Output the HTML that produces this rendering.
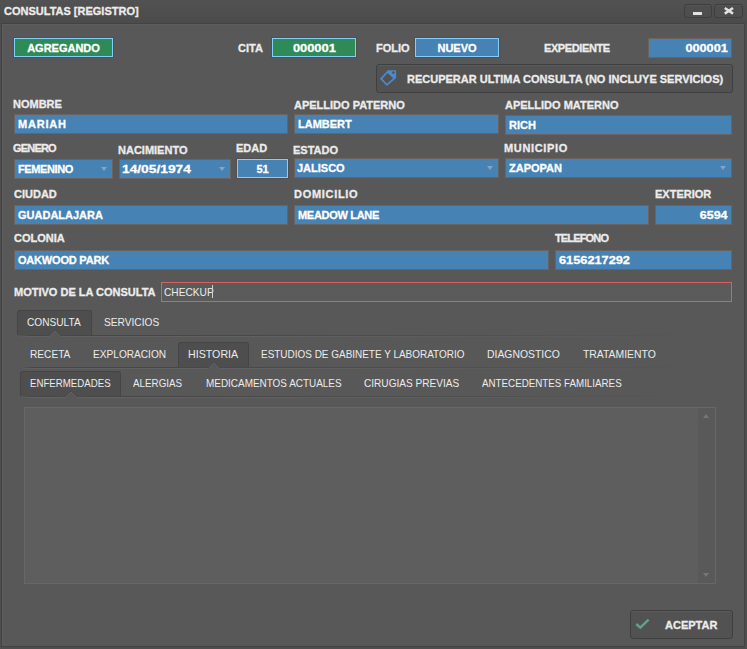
<!DOCTYPE html>
<html><head><meta charset="utf-8">
<style>
*{box-sizing:border-box;margin:0;padding:0}
html,body{width:747px;height:649px;overflow:hidden;background:#4e4e4e}
body{position:relative;font-family:"Liberation Sans",sans-serif;font-size:11px;line-height:11px;color:#ececec}
.a{position:absolute}
.t{position:absolute;white-space:pre;font-weight:bold;line-height:11px;-webkit-text-stroke:0.3px currentColor}
.r{position:absolute;white-space:pre;font-weight:normal;line-height:11px;transform-origin:0 0}
.inp{position:absolute;background:#4682b4;border:1px solid #6b6360}
.box{position:absolute;border:1px solid #87cefa;box-shadow:0 0 0 1px #505050}
.g{background:#2e8b57}
.b{background:#4682b4}
.w{color:#fff}
.btn{position:absolute;background:#525252;border:1px solid #3f3f3f;border-radius:3px;box-shadow:inset 0 1px 0 #5b5b5b}
.arr{position:absolute;width:0;height:0;border-left:3.5px solid transparent;border-right:3.5px solid transparent;border-top:4px solid #88a5c0}
.tab{position:absolute;background:#4e4e4e;border:1px solid #454545;border-bottom:none;border-radius:3px 3px 0 0}
</style></head><body>
<div class="a" style="left:0px;top:0px;width:747px;height:23px;background:linear-gradient(#525252,#4b4b4b)"></div>
<div class="t" style="left:4px;top:6px;">CONSULTAS [REGISTRO]</div>
<div class="btn" style="left:684px;top:4px;width:28px;height:14px;background:#4e4e4e;border-color:#3e3e3e;box-shadow:inset 0 1px 0 #555"></div>
<div class="a" style="left:693px;top:12px;width:9px;height:2.6px;background:#e2e2e2"></div>
<div class="btn" style="left:714px;top:4px;width:29px;height:14px;background:#4e4e4e;border-color:#3e3e3e;box-shadow:inset 0 1px 0 #555"></div>
<svg class="a" style="left:723px;top:6px" width="12" height="10" viewBox="0 0 12 10"><path d="M1.8 2 L10 7.6 M10 2 L1.8 7.6" stroke="#e2e2e2" stroke-width="2.5"/></svg>
<div class="a" style="left:1px;top:23px;width:744px;height:624px;background:#585858;border:1px solid #434343;box-shadow:inset 1px 1px 0 #5d5d5d"></div>
<div class="box g" style="left:14px;top:38px;width:99px;height:19px"></div>
<div class="t w" style="left:14px;top:43px;width:99px;text-align:center">AGREGANDO</div>
<div class="t" style="left:238px;top:43px;">CITA</div>
<div class="box g" style="left:272px;top:38px;width:84px;height:19px"></div>
<div class="t w" style="left:272px;top:43px;width:84px;text-align:center"><span style="display:inline-block;transform:scaleX(1.17);transform-origin:50% 0">000001</span></div>
<div class="t" style="left:376px;top:43px;">FOLIO</div>
<div class="box b" style="left:415px;top:38px;width:84px;height:19px"></div>
<div class="t w" style="left:415px;top:43px;width:84px;text-align:center">NUEVO</div>
<div class="t" style="left:544px;top:43px;letter-spacing:-0.4px">EXPEDIENTE</div>
<div class="inp" style="left:648px;top:38px;width:84px;height:20px"></div>
<div class="t w" style="left:648px;top:43px;width:80px;text-align:right"><span style="display:inline-block;transform:scaleX(1.15);transform-origin:100% 0">000001</span></div>
<div class="btn" style="left:376px;top:64px;width:357px;height:29px"></div>
<svg class="a" style="left:376px;top:66px" width="24" height="24" viewBox="0 0 24 24"><path fill="#4a8bd0" fill-rule="evenodd" d="M3.9 12.8 L11.9 4.2 L20.1 4.2 L20.1 11.9 L10.9 20.1 Z M6.3 12.8 L11.5 7.1 L17.2 12.3 L10.9 17.8 Z M17.4 5.2 A1.3 1.3 0 1 0 17.41 5.2 Z"/></svg>
<div class="t" style="left:407px;top:74px;">RECUPERAR ULTIMA CONSULTA (NO INCLUYE SERVICIOS)</div>
<div class="t" style="left:13px;top:99px;">NOMBRE</div>
<div class="inp" style="left:14px;top:114px;width:274px;height:20px"></div>
<div class="t w" style="left:18px;top:119px;letter-spacing:0.8px">MARIAH</div>
<div class="t" style="left:294px;top:100px;">APELLIDO PATERNO</div>
<div class="inp" style="left:294px;top:114px;width:205px;height:20px"></div>
<div class="t w" style="left:298px;top:119px;">LAMBERT</div>
<div class="t" style="left:505px;top:100px;">APELLIDO MATERNO</div>
<div class="inp" style="left:505px;top:115px;width:227px;height:20px"></div>
<div class="t w" style="left:509px;top:120px;">RICH</div>
<div class="t" style="left:13px;top:143px;letter-spacing:-0.8px">GENERO</div>
<div class="inp" style="left:14px;top:159px;width:99px;height:20px"></div>
<div class="t w" style="left:18px;top:164px;letter-spacing:-0.4px">FEMENINO</div>
<div class="arr" style="left:101px;top:167px"></div>
<div class="t" style="left:118px;top:145px;">NACIMIENTO</div>
<div class="inp" style="left:119px;top:159px;width:112px;height:20px"></div>
<div class="t w" style="left:122px;top:164px;"><span style="display:inline-block;transform:scaleX(1.25);transform-origin:0 0">14/05/1974</span></div>
<div class="arr" style="left:219px;top:167px"></div>
<div class="t" style="left:236px;top:143px;">EDAD</div>
<div class="box b" style="left:237px;top:159px;width:51px;height:19px"></div>
<div class="t w" style="left:237px;top:164px;width:51px;text-align:center">51</div>
<div class="t" style="left:293px;top:145px;">ESTADO</div>
<div class="inp" style="left:294px;top:158px;width:205px;height:20px"></div>
<div class="t w" style="left:297px;top:163px;">JALISCO</div>
<div class="arr" style="left:487px;top:166px"></div>
<div class="t" style="left:504px;top:143px;letter-spacing:0.65px">MUNICIPIO</div>
<div class="inp" style="left:505px;top:158px;width:227px;height:20px"></div>
<div class="t w" style="left:509px;top:163px;">ZAPOPAN</div>
<div class="arr" style="left:720px;top:166px"></div>
<div class="t" style="left:14px;top:189px;">CIUDAD</div>
<div class="inp" style="left:14px;top:205px;width:274px;height:20px"></div>
<div class="t w" style="left:18px;top:210px;">GUADALAJARA</div>
<div class="t" style="left:294px;top:189px;letter-spacing:0.7px">DOMICILIO</div>
<div class="inp" style="left:294px;top:205px;width:355px;height:20px"></div>
<div class="t w" style="left:298px;top:210px;letter-spacing:-0.3px">MEADOW LANE</div>
<div class="t" style="left:655px;top:189px;">EXTERIOR</div>
<div class="inp" style="left:655px;top:205px;width:77px;height:20px"></div>
<div class="t w" style="left:655px;top:210px;width:72px;text-align:right"><span style="display:inline-block;transform:scaleX(1.13);transform-origin:100% 0">6594</span></div>
<div class="t" style="left:14px;top:233px;">COLONIA</div>
<div class="inp" style="left:14px;top:250px;width:535px;height:20px"></div>
<div class="t w" style="left:18px;top:255px;letter-spacing:-0.2px">OAKWOOD PARK</div>
<div class="t" style="left:555px;top:233px;letter-spacing:-0.85px">TELEFONO</div>
<div class="inp" style="left:555px;top:250px;width:177px;height:20px"></div>
<div class="t w" style="left:559px;top:255px;"><span style="display:inline-block;transform:scaleX(1.16);transform-origin:0 0">6156217292</span></div>
<div class="t" style="left:14px;top:287px;">MOTIVO DE LA CONSULTA</div>
<div class="a" style="left:161px;top:282px;width:571px;height:20px;border:1px solid #d9605e;background:#5b5b5b"></div>
<div class="r" style="left:164px;top:287px;transform:scaleX(0.925)">CHECKUP</div>
<div class="a" style="left:212px;top:285px;width:1px;height:13px;background:#cfcfcf"></div>
<div class="tab" style="left:17px;top:310px;width:75px;height:25px"></div>
<div class="a" style="left:17px;top:335px;width:702px;height:1px;background:linear-gradient(90deg,rgba(0,0,0,0) 0%,rgba(0,0,0,.2) 2%,rgba(0,0,0,.2) 22%,rgba(0,0,0,0) 100%)"></div>
<div class="a" style="left:17px;top:336px;width:702px;height:1px;background:linear-gradient(90deg,rgba(255,255,255,0) 0%,rgba(255,255,255,.06) 2%,rgba(255,255,255,.06) 22%,rgba(255,255,255,0) 100%)"></div>
<svg class="a" style="left:44px;top:326px" width="22" height="12" viewBox="0 0 22 12"><path d="M5 10.5 L11 4.5 L17 10.5 L17 12 L5 12 Z" fill="#585858"/><path d="M0 9.5 H5.5 L11 4 L16.5 9.5 H22" fill="none" stroke="#4a4a4a" stroke-width="1"/><path d="M0 10.5 H5.5 L11 5 L16.5 10.5 H22" fill="none" stroke="#616161" stroke-width="1"/></svg>
<div class="r" style="left:27px;top:317px;transform:scaleX(0.921)">CONSULTA</div>
<div class="r" style="left:104px;top:317px;transform:scaleX(0.925)">SERVICIOS</div>
<div class="tab" style="left:178px;top:342px;width:71px;height:25px"></div>
<div class="a" style="left:20px;top:367px;width:699px;height:1px;background:linear-gradient(90deg,rgba(0,0,0,0) 0%,rgba(0,0,0,.2) 2%,rgba(0,0,0,.2) 22%,rgba(0,0,0,0) 100%)"></div>
<div class="a" style="left:20px;top:368px;width:699px;height:1px;background:linear-gradient(90deg,rgba(255,255,255,0) 0%,rgba(255,255,255,.06) 2%,rgba(255,255,255,.06) 22%,rgba(255,255,255,0) 100%)"></div>
<svg class="a" style="left:203px;top:358px" width="22" height="12" viewBox="0 0 22 12"><path d="M5 10.5 L11 4.5 L17 10.5 L17 12 L5 12 Z" fill="#585858"/><path d="M0 9.5 H5.5 L11 4 L16.5 9.5 H22" fill="none" stroke="#4a4a4a" stroke-width="1"/><path d="M0 10.5 H5.5 L11 5 L16.5 10.5 H22" fill="none" stroke="#616161" stroke-width="1"/></svg>
<div class="r" style="left:30px;top:349px;transform:scaleX(0.922)">RECETA</div>
<div class="r" style="left:93px;top:349px;transform:scaleX(0.92)">EXPLORACION</div>
<div class="r" style="left:188px;top:349px;transform:scaleX(0.97)">HISTORIA</div>
<div class="r" style="left:261px;top:349px;transform:scaleX(0.905)">ESTUDIOS DE GABINETE Y LABORATORIO</div>
<div class="r" style="left:487px;top:349px;transform:scaleX(0.945)">DIAGNOSTICO</div>
<div class="r" style="left:583px;top:349px;transform:scaleX(0.945)">TRATAMIENTO</div>
<div class="tab" style="left:20px;top:371px;width:101px;height:25px"></div>
<div class="a" style="left:20px;top:396px;width:699px;height:1px;background:linear-gradient(90deg,rgba(0,0,0,0) 0%,rgba(0,0,0,.2) 2%,rgba(0,0,0,.2) 22%,rgba(0,0,0,0) 100%)"></div>
<div class="a" style="left:20px;top:397px;width:699px;height:1px;background:linear-gradient(90deg,rgba(255,255,255,0) 0%,rgba(255,255,255,.06) 2%,rgba(255,255,255,.06) 22%,rgba(255,255,255,0) 100%)"></div>
<svg class="a" style="left:60px;top:387px" width="22" height="12" viewBox="0 0 22 12"><path d="M5 10.5 L11 4.5 L17 10.5 L17 12 L5 12 Z" fill="#585858"/><path d="M0 9.5 H5.5 L11 4 L16.5 9.5 H22" fill="none" stroke="#4a4a4a" stroke-width="1"/><path d="M0 10.5 H5.5 L11 5 L16.5 10.5 H22" fill="none" stroke="#616161" stroke-width="1"/></svg>
<div class="r" style="left:30px;top:378px;transform:scaleX(0.879)">ENFERMEDADES</div>
<div class="r" style="left:133px;top:378px;transform:scaleX(0.893)">ALERGIAS</div>
<div class="r" style="left:206px;top:378px;transform:scaleX(0.903)">MEDICAMENTOS ACTUALES</div>
<div class="r" style="left:364px;top:378px;transform:scaleX(0.917)">CIRUGIAS PREVIAS</div>
<div class="r" style="left:482px;top:378px;transform:scaleX(0.889)">ANTECEDENTES FAMILIARES</div>
<div class="a" style="left:24px;top:407px;width:692px;height:177px;border:1px solid #676767;background:#5e5e5e"></div>
<div class="a" style="left:698px;top:408px;width:17px;height:175px;background:#595959"></div>
<div class="a" style="left:703px;top:414px;width:0;height:0;border-left:3.5px solid transparent;border-right:3.5px solid transparent;border-bottom:4px solid #777"></div>
<div class="a" style="left:703px;top:573px;width:0;height:0;border-left:3.5px solid transparent;border-right:3.5px solid transparent;border-top:4px solid #777"></div>
<div class="btn" style="left:630px;top:610px;width:103px;height:29px"></div>
<svg class="a" style="left:634px;top:617px" width="18" height="14" viewBox="0 0 18 14"><path d="M2.3 7 L6.3 10.7 L14.6 2.6" fill="none" stroke="#66a08b" stroke-width="2.4"/></svg>
<div class="t" style="left:665px;top:620px;">ACEPTAR</div>
</body></html>
